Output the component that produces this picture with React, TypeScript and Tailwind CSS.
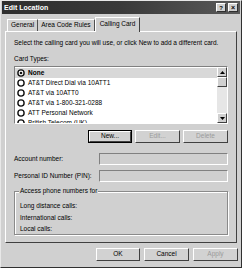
const font = { fontFamily: '"Liberation Sans", Arial, sans-serif' };

const cards = [
  "None",
  "AT&T Direct Dial via 10ATT1",
  "AT&T via 10ATT0",
  "AT&T via 1-800-321-0288",
  "ATT Personal Network",
  "British Telecom (UK)",
];

function Radio({ checked }: { checked?: boolean }) {
  return (
    <svg width="8" height="8" viewBox="0 0 8 8" className="shrink-0">
      <circle cx="4" cy="4" r="3.1" fill="white" stroke="#111" strokeWidth="1.4" />
      {checked && <circle cx="4" cy="4" r="1.3" fill="#111" />}
    </svg>
  );
}

function Btn({ label, disabled, isDefault, w }: { label: string; disabled?: boolean; isDefault?: boolean; w: string }) {
  return (
    <div className={`${w} h-[13px] ${isDefault ? "border border-black" : ""}`}>
      <div className="h-full w-full border border-t-white border-l-white border-r-[#404040] border-b-[#404040] bg-[#d2d2d2] flex items-center justify-center">
        <span className={`text-[6.5px] leading-none ${disabled ? "text-[#9a9a9a]" : "text-black"}`}>{label}</span>
      </div>
    </div>
  );
}

function Field() {
  return (
    <div className="w-[129px] h-[12px] border border-t-[#808080] border-l-[#808080] border-r-white border-b-white bg-[#cfcfcf]" />
  );
}

export default function App() {
  return (
    <div style={font} className="w-[242px] h-[268px] bg-[#d0d0d0] border border-l-[#e8e8e8] border-t-[#e8e8e8] border-r-[#303030] border-b-[#303030] flex flex-col overflow-hidden">
      <div className="h-[13px] mx-[1px] bg-gradient-to-r from-[#2e2e2e] via-[#3a3a3a] to-[#5a5a5a] flex items-center pl-[2px] pr-[2px]">
        <span className="text-white font-bold text-[7px] leading-none">Edit Location</span>
        <div className="ml-auto flex gap-[2px]">
          <div className="w-[10px] h-[9px] bg-[#d0d0d0] border border-t-white border-l-white border-r-[#303030] border-b-[#303030] flex items-center justify-center text-[6px] font-bold leading-none">?</div>
          <div className="w-[10px] h-[9px] bg-[#d0d0d0] border border-t-white border-l-white border-r-[#303030] border-b-[#303030] flex items-center justify-center text-[7px] font-bold leading-none">×</div>
        </div>
      </div>

      <div className="flex items-end h-[16px] pl-[6px] mt-[1px] text-[6.5px] leading-none text-black">
        <div className="h-[12px] px-[3px] flex items-center border-t border-l border-t-white border-l-white border-r border-r-[#505050]">General</div>
        <div className="h-[12px] px-[3px] flex items-center border-t border-t-white border-r border-r-[#505050]">Area Code Rules</div>
        <div className="h-[15px] px-[4px] -mb-[1px] flex items-start pt-[3px] bg-[#d0d0d0] border-t border-l border-t-white border-l-white border-r border-r-[#404040] relative z-10">Calling Card</div>
      </div>

      <div className="mx-[4px] h-[212px] border border-t-white border-l-white border-r-[#404040] border-b-[#404040] px-[8px] text-[6.5px] leading-none text-black">
        <div className="mt-[8px]">Select the calling card you will use, or click New to add a different card.</div>
        <div className="mt-[9px]">Card Types:</div>
        <div className="mt-[4px] h-[58px] border border-t-[#808080] border-l-[#808080] border-r-white border-b-white bg-white flex">
          <div className="flex-1 overflow-hidden pt-[1px]">
            {cards.map((c, i) => (
              <div key={c} className={`h-[10px] flex items-center gap-[3px] pl-[2px] ${i === 0 ? "bg-[#d8d8d8] font-bold" : ""}`}>
                <Radio checked={i === 0} />
                <span className="text-[6.5px] leading-none">{c}</span>
              </div>
            ))}
          </div>
          <div className="w-[10px] flex flex-col bg-[#e6e6e6]">
            <div className="h-[10px] bg-[#d0d0d0] border border-t-white border-l-white border-r-[#404040] border-b-[#404040] flex items-center justify-center">
              <svg width="5" height="3" viewBox="0 0 5 3"><path d="M0 3L2.5 0L5 3Z" fill="#000" /></svg>
            </div>
            <div className="h-[10px] bg-[#d0d0d0] border border-t-white border-l-white border-r-[#404040] border-b-[#404040]" />
            <div className="flex-1" />
            <div className="h-[10px] bg-[#d0d0d0] border border-t-white border-l-white border-r-[#404040] border-b-[#404040] flex items-center justify-center">
              <svg width="5" height="3" viewBox="0 0 5 3"><path d="M0 0L2.5 3L5 0Z" fill="#000" /></svg>
            </div>
          </div>
        </div>

        <div className="mt-[6px] flex justify-end gap-[3px]">
          <Btn label="New..." isDefault w="w-[44px]" />
          <Btn label="Edit..." disabled w="w-[45px]" />
          <Btn label="Delete" disabled w="w-[45px]" />
        </div>

        <div className="mt-[10px] flex items-center justify-between">
          <span>Account number:</span>
          <Field />
        </div>
        <div className="mt-[5px] flex items-center justify-between">
          <span>Personal ID Number (PIN):</span>
          <Field />
        </div>

        <div className="mt-[9px] h-[44px] border border-[#8a8a8a] shadow-[1px_1px_0_white,inset_1px_1px_0_white] relative px-[5px]">
          <span className="absolute -top-[4px] left-[4px] bg-[#d0d0d0] px-[1px]">Access phone numbers for</span>
          <div className="mt-[11px] flex flex-col gap-[5px]">
            <span>Long distance calls:</span>
            <span>International calls:</span>
            <span>Local calls:</span>
          </div>
        </div>
      </div>

      <div className="mt-[5px] pr-[3px] flex justify-end gap-[4px]">
        <Btn label="OK" w="w-[44px]" />
        <Btn label="Cancel" w="w-[45px]" />
        <Btn label="Apply" disabled w="w-[45px]" />
      </div>
    </div>
  );
}
